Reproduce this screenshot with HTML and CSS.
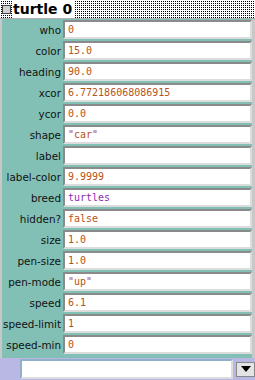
FILE: index.html
```html
<!DOCTYPE html>
<html lang="en">

<head>
    <meta charset="UTF-8">
    <title>turtle 0</title>
    <link rel="stylesheet" href="styles.css">
</head>

<body>
    <div class="inspector">
        <div class="titlebar">
            <span class="close-box"></span>
            <span class="title">turtle 0</span>
        </div>

        <div class="fields">
            <div class="row"><label>who</label><div class="value">0</div></div>
            <div class="row"><label>color</label><div class="value">15.0</div></div>
            <div class="row"><label>heading</label><div class="value">90.0</div></div>
            <div class="row"><label>xcor</label><div class="value">6.772186068086915</div></div>
            <div class="row"><label>ycor</label><div class="value">0.0</div></div>
            <div class="row"><label>shape</label><div class="value">"car"</div></div>
            <div class="row"><label>label</label><div class="value"></div></div>
            <div class="row"><label>label-color</label><div class="value">9.9999</div></div>
            <div class="row"><label>breed</label><div class="value agentset">turtles</div></div>
            <div class="row"><label>hidden?</label><div class="value">false</div></div>
            <div class="row"><label>size</label><div class="value">1.0</div></div>
            <div class="row"><label>pen-size</label><div class="value">1.0</div></div>
            <div class="row"><label>pen-mode</label><div class="value">"up"</div></div>
            <div class="row"><label>speed</label><div class="value">6.1</div></div>
            <div class="row"><label>speed-limit</label><div class="value">1</div></div>
            <div class="row"><label>speed-min</label><div class="value">0</div></div>
        </div>

        <div class="command">
            <div class="command-input"></div>
            <div class="dropdown"><span class="arrow"></span></div>
        </div>
    </div>
</body>

</html>
```

FILE: styles.css
```css
body {
    margin: 0;
    background-color: #ffffff;
    font-family: 'DejaVu Sans', sans-serif;
}

.inspector {
    width: 255px;
    height: 380px;
    display: flex;
    flex-direction: column;
}

.titlebar {
    height: 18px;
    display: flex;
    align-items: center;
    gap: 1px;
    padding-left: 2px;
    background: conic-gradient(#000 25%, #fff 0) 0 1px / 2px 2px;
    border-bottom: 1px solid #b0b0b0;
}

.close-box {
    width: 7px;
    height: 7px;
    border: 1px solid #444;
    background-color: #d0d0d0;
}

.title {
    background-color: #fff;
    font-size: 14px;
    font-weight: bold;
    padding: 0 2px 0 1px;
    line-height: 17px;
}

.fields {
    flex: 1;
    background-color: #82c0b6;
    border-left: 2px solid #c8c8c8;
    border-right: 3px solid #c8c8c8;
    padding-top: 1px;
    display: flex;
    flex-direction: column;
    gap: 2px;
}

.row {
    display: flex;
    align-items: center;
    gap: 2px;
    height: 19px;
}

.row label {
    width: 59px;
    flex-shrink: 0;
    text-align: right;
    white-space: nowrap;
    font-size: 10.4px;
    color: #111;
}

.value {
    width: 182px;
    height: 15px;
    background-color: #fff;
    border: 2px solid;
    border-color: #8a8a8a #dcdcdc #dcdcdc #8a8a8a;
    font-family: 'DejaVu Sans Mono', monospace;
    font-size: 10px;
    line-height: 15px;
    padding-left: 3px;
    color: #b5531a;
}

.value.agentset {
    color: #8a2db3;
}

.command {
    height: 22px;
    display: flex;
    align-items: center;
    background-color: #b9b7e4;
    padding-left: 20px;
    gap: 3px;
}

.command-input {
    width: 209px;
    height: 16px;
    background-color: #fff;
    border: 2px solid;
    border-color: #8fb0c8 #dcdcdc #dcdcdc #8fb0c8;
}

.dropdown {
    width: 17px;
    height: 13px;
    border: 1px solid #888;
    background-color: #e4e4e4;
    display: flex;
    align-items: center;
    justify-content: center;
}

.arrow {
    border-left: 5px solid transparent;
    border-right: 5px solid transparent;
    border-top: 6px solid #000;
}
```
